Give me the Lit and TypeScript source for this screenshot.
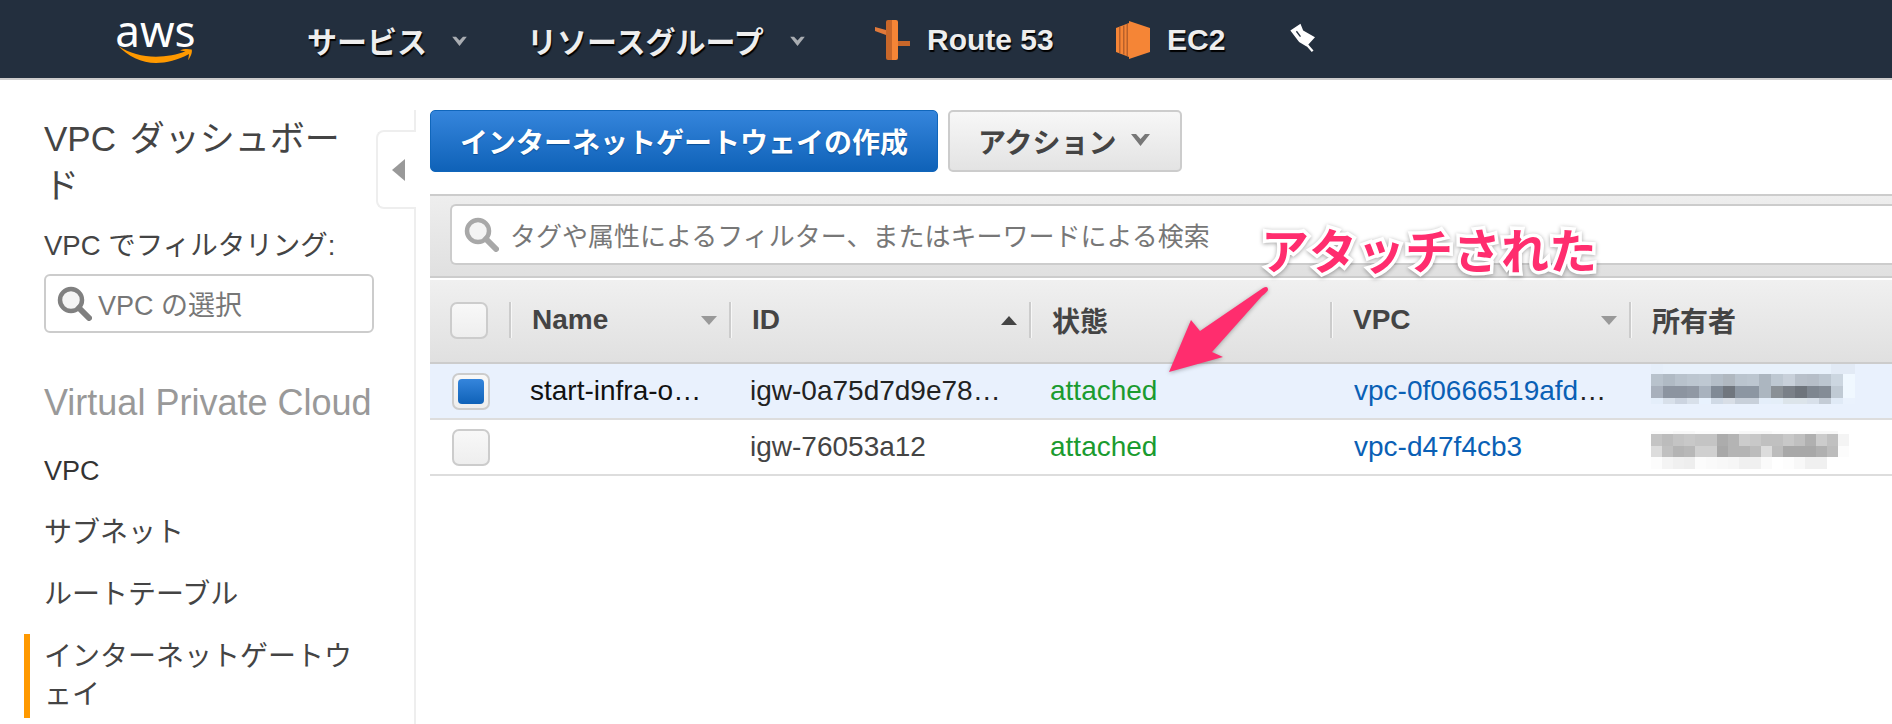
import { LitElement, html, css, svg } from 'lit';
import { customElement } from 'lit/decorators.js';

interface IgwRow {
  name: string;
  id: string;
  state: string;
  vpc: string;
  selected: boolean;
}

const ROWS: IgwRow[] = [
  { name: 'start-infra-o…', id: 'igw-0a75d7d9e78…', state: 'attached', vpc: 'vpc-0f0666519afd', selected: true },
  { name: '', id: 'igw-76053a12', state: 'attached', vpc: 'vpc-d47f4cb3', selected: false },
];

// pixelated owner column, colours read off the reference
const OWNER_A = {
  cell: 12,
  heights: [10, 12, 12, 6],
  bands: [
    'e6effa e8f1fb e8f1fb e8f1fb e8f1fb e8f1fb e8f1fb e8f1fb e8f1fb e8f1fb e8f1fb e8f1fb e8f1fb e8f1fb e8f1fb e2eaf5 e2eaf5',
    'b8c2cc b0bac4 b8c2cc bcc6d0 bec8d2 b4bec8 b0b8c0 bac4ce bcc6d0 acb6c0 bec8d2 c8d0da b8c0ca b6bec8 bcc6d0 ccd6e0 f0f8ff',
    'a8b0bc 8c94a0 8c94a0 9098a4 a8b2be 808a96 70767e 8c96a2 8c96a2 acb6c0 8a9096 7a8088 6e747c 7e8690 848c96 c0cad4 f0f8ff',
    'e4eefa d8e0ea ccd4e0 d8e0ea e8f2fe d0dae6 d8dee6 c8d0da c8d0da e4eefa e4eef8 dce4ea dce4ea d8e0ea c4ccd6 e0eaf6 eaf2fd',
  ],
};

const OWNER_B = {
  cell: 11,
  heights: [3, 12, 11, 12],
  bands: [
    'fcfcfc fcfcfc f8f8f8 f8f8f8 fcfcfc fcfcfc fcfcfc fcfcfc f8f8f8 f8f8f8 f8f8f8 fcfcfc fcfcfc fcfcfc fcfcfc f8f8f8 f8f8f8 ffffff',
    'c4c4c4 bcbcbc c4c4c4 c8c8c8 c4c4c4 c4c4c4 acacac b4b4b4 cccccc c8c8c8 c0c0c0 c0c0c0 c8c8c8 c0c0c0 b0b0b0 cccccc c0c0c0 f4f4f4',
    'dcdcdc c0c0c0 b4b4b4 b8b8b8 d0d0d0 d0d0d0 a8a8a8 b4b4b4 b4b4b4 bcbcbc dcdcdc bcbcbc a8a8a8 a8a8a8 a8a8a8 b0b0b0 bcbcbc fcfcfc',
    'fcfcfc f4f4f4 f0f0f0 eeeeee fcfcfc fafafa f8f8f8 f6f6f6 f0f0f0 f0f0f0 fafafa ffffff fdfdfd f8f8f8 f0f0f0 f0f0f0 ffffff ffffff',
  ],
};

const caret = (cls: string) => html`<svg class=${cls} viewBox="0 0 19 13"><path d="M0 1 L5 1 L9.5 6 L14 1 L19 1 L9.5 13 Z" fill="currentColor"></path></svg>`;

const magnifier = (cls: string) => html`<svg class=${cls} viewBox="0 0 35 35">
  <circle cx="14" cy="14" r="11" fill="#f4f4f4" stroke="currentColor" stroke-width="4.5"></circle>
  <path d="M22 22 L32 32" stroke="currentColor" stroke-width="6" stroke-linecap="round"></path>
</svg>`;

@customElement('app-root')
export class AppRoot extends LitElement {
  static styles = css`
    :host {
      display: block;
      position: relative;
      width: 1892px;
      height: 724px;
      overflow: hidden;
      background: #fff;
      font-family: 'Liberation Sans', 'Noto Sans CJK JP', sans-serif;
      color: #444;
    }

    /* top bar */
    .topbar {
      box-sizing: border-box;
      display: flex;
      align-items: center;
      height: 80px;
      padding-top: 2px;
      background: #232f3e;
      border-bottom: 2px solid #ccc;
      color: #eee;
      font-size: 30px;
      font-weight: 700;
      text-shadow: 1px 2px 1px #000;
    }
    .logo {
      display: flex;
      flex-direction: column;
      align-items: center;
      width: 83px;
      margin: -4px 0 0 114px;
      height: 50px;
    }
    .logo span {
      font-family: 'Noto Sans', sans-serif;
      font-size: 44px;
      font-weight: 400;
      line-height: 34px;
      color: #fff;
      text-shadow: none;
    }
    .logo svg {
      width: 83px;
      height: 19px;
      margin-top: -1px;
    }
    .nav-services {
      margin-left: 110px;
      width: 117px;
      white-space: nowrap;
    }
    .top-caret {
      width: 17px;
      height: 10px;
      color: #a9adb2;
    }
    .caret-services {
      margin: 2px 0 0 27px;
    }
    .nav-groups {
      margin-left: 59px;
      white-space: nowrap;
      width: 239px;
    }
    .caret-groups {
      margin: 2px 0 0 23px;
    }
    .icon-r53 {
      width: 36px;
      height: 40px;
      margin-left: 68px;
    }
    .txt-r53 {
      margin-left: 17px;
      width: 127px;
      white-space: nowrap;
    }
    .icon-ec2 {
      width: 34px;
      height: 38px;
      margin-left: 62px;
    }
    .txt-ec2 {
      margin-left: 17px;
      width: 58px;
    }
    .icon-pin {
      width: 27px;
      height: 29px;
      margin-left: 64px;
      margin-top: -6px;
    }

    .body {
      display: flex;
      height: 644px;
    }

    /* left navigation */
    .sidebar {
      box-sizing: border-box;
      width: 416px;
      flex: none;
      margin-top: 30px;
      padding: 5px 40px 0 44px;
      border-right: 2px solid #eee;
    }
    .sb-title {
      font-size: 35px;
      font-weight: 400;
      line-height: 47px;
      word-spacing: 4px;
      margin: 0;
      max-width: 310px;
      color: #444;
    }
    .sb-label {
      font-size: 27.5px;
      line-height: 38px;
      margin-top: 18px;
      white-space: nowrap;
    }
    .sb-filter {
      box-sizing: border-box;
      display: flex;
      align-items: center;
      gap: 6px;
      width: 330px;
      height: 59px;
      margin-top: 9px;
      padding-left: 11px;
      border: 2px solid #ccc;
      border-radius: 6px;
      font-size: 27px;
      color: #777;
      white-space: nowrap;
    }
    .mag {
      width: 35px;
      height: 35px;
      flex: none;
      color: #808080;
    }
    .sb-section {
      font-size: 36px;
      line-height: 44px;
      color: #999;
      margin-top: 48px;
      white-space: nowrap;
    }
    .sb-nav {
      display: flex;
      flex-direction: column;
      gap: 16px;
      margin: 23px 0 0 -20px;
      font-size: 28px;
      line-height: 38px;
      line-break: anywhere;
    }
    .sb-item {
      box-sizing: border-box;
      padding: 4px 0 4px 14px;
      border-left: 6px solid transparent;
    }
    .sb-item.first {
      color: #333;
      font-size: 27px;
    }
    .sb-item.active {
      border-left-color: #f90;
    }
    .collapse {
      box-sizing: border-box;
      position: absolute;
      left: 376px;
      top: 130px;
      width: 40px;
      height: 79px;
      background: #fff;
      border: 2px solid #eee;
      border-right: none;
      border-radius: 8px 0 0 8px;
      display: flex;
      align-items: center;
      padding-left: 14px;
    }
    .collapse i {
      display: block;
      border-style: solid;
      border-width: 11px 13px 11px 0;
      border-color: transparent #999 transparent transparent;
    }

    /* main content */
    .main {
      flex: 1;
      min-width: 0;
      padding: 30px 0 0 14px;
    }
    .actions {
      display: flex;
      gap: 10px;
    }
    .btn {
      box-sizing: border-box;
      display: flex;
      align-items: center;
      height: 62px;
      border-radius: 5px;
      font-size: 28px;
      font-weight: 700;
      white-space: nowrap;
    }
    .btn-primary {
      width: 508px;
      justify-content: center;
      color: #fff;
      background: linear-gradient(#3585dc, #0f62b8);
      border: 1px solid #1066bb;
      text-shadow: 0 1px 1px #0b4f96;
    }
    .btn-secondary {
      width: 234px;
      padding-left: 28px;
      color: #444;
      background: linear-gradient(#f7f7f7, #e3e3e3);
      border: 2px solid #ccc;
    }
    .btn-secondary svg {
      width: 19px;
      height: 13px;
      margin: -4px 0 0 14px;
      color: #777;
    }
    .filter-bar {
      box-sizing: border-box;
      height: 84px;
      margin-top: 22px;
      padding: 8px 0 0 20px;
      background: linear-gradient(#eee, #e0e0e0);
      border-top: 2px solid #ccc;
      border-bottom: 2px solid #ccc;
    }
    .filter-input {
      box-sizing: border-box;
      display: flex;
      align-items: center;
      gap: 11px;
      height: 61px;
      padding-left: 12px;
      background: #fff;
      border: 2px solid #ccc;
      border-right: none;
      border-radius: 6px 0 0 6px;
      font-size: 26px;
      color: #777;
      white-space: nowrap;
    }
    .filter-input .mag {
      color: #a8a8a8;
    }

    .grid {
      display: grid;
      grid-template-columns: 79px 220px 300px 301px 299px 1fr;
    }
    .thead {
      height: 84px;
      box-sizing: border-box;
      margin-top: 2px;
      background: linear-gradient(#f0f0f0, #e0e0e0);
      border-bottom: 2px solid #ccc;
      font-size: 28px;
      font-weight: 700;
      color: #444;
    }
    .th {
      display: flex;
      align-items: center;
      padding-right: 12px;
      padding-bottom: 2px;
      min-width: 0;
    }
    .th .sep {
      width: 2px;
      height: 36px;
      margin-right: 21px;
      background: #ccc;
      box-shadow: 1px 0 0 #f7f7f7;
      flex: none;
    }
    .sort {
      margin-left: auto;
      border-style: solid;
      border-color: transparent;
      border-width: 0 8px;
    }
    .sort.down {
      border-top: 9px solid #999;
    }
    .sort.up {
      border-bottom: 9px solid #444;
    }
    .cb {
      box-sizing: border-box;
      width: 38px;
      height: 37px;
      border: 2px solid #ccc;
      border-radius: 7px;
      background: linear-gradient(#f8f8f8, #eee);
      display: flex;
      align-items: center;
      justify-content: center;
    }
    .cb b {
      display: block;
      width: 26px;
      height: 25px;
      border-radius: 4px;
      background: linear-gradient(#3585dc, #0f62b8);
    }
    .th-check {
      padding-left: 20px;
      padding-right: 0;
    }
    .row {
      height: 56px;
      box-sizing: border-box;
      border-bottom: 2px solid #ddd;
      font-size: 28px;
      align-items: center;
      white-space: nowrap;
    }
    .row.selected {
      background: #e9f1fd;
    }
    .td {
      padding-left: 21px;
      min-width: 0;
    }
    .td-check {
      padding-left: 22px;
    }
    .td-name {
      color: #111;
    }
    .td-id {
      color: #444;
    }
    .row.selected .td-id {
      color: #222;
    }
    .td-state {
      color: #1a9b2f;
    }
    .td-vpc {
      padding-left: 24px;
      color: #0a60b5;
    }
    .td-vpc em {
      font-style: normal;
      color: #222;
    }
    .td-owner {
      align-self: start;
      padding-left: 22px;
    }
    .mosaic {
      display: grid;
    }
    .mosaic.lower {
      margin-top: 11px;
    }

    /* callout drawn over the table */
    .callout {
      position: absolute;
      left: 1261px;
      top: 213px;
      font-family: 'Noto Sans CJK JP', sans-serif;
      font-size: 48px;
      font-weight: 700;
      line-height: 70px;
      color: #ff2d6e;
      white-space: nowrap;
      -webkit-text-stroke: 7px #fff;
      paint-order: stroke fill;
      filter: drop-shadow(0 1px 2px rgba(0, 0, 0, 0.35));
    }
    .arrow {
      position: absolute;
      left: 1160px;
      top: 280px;
      width: 120px;
      height: 100px;
      filter: drop-shadow(0 1px 2px rgba(0, 0, 0, 0.3));
    }
  `;

  private renderMosaic(data: typeof OWNER_A, lower: boolean) {
    const cells = data.bands.flatMap((b) => b.split(' '));
    const cols = data.bands[0].split(' ').length;
    return html`<div
      class="mosaic ${lower ? 'lower' : ''}"
      style="grid-template-columns:repeat(${cols},${data.cell}px);grid-template-rows:${data.heights.map((h) => h + 'px').join(' ')}"
    >
      ${cells.map((c) => html`<span style="background:#${c}"></span>`)}
    </div>`;
  }

  private renderTopbar() {
    return html`<header class="topbar">
      <div class="logo">
        <span>aws</span>
        <svg viewBox="0 0 83 19">
          ${svg`<path d="M0 0 C12 8 27 12 42 12 C54 12 66 10 75 6 L69 5 C73 3 78 3 82 4 C83 8 80 13 78 16 L79 9 C66 16 54 19 42 19 C26 19 10 11 0 0 Z" fill="#f90"></path>`}
        </svg>
      </div>
      <span class="nav-services">サービス</span>
      ${caret('top-caret caret-services')}
      <span class="nav-groups">リソースグループ</span>
      ${caret('top-caret caret-groups')}
      <svg class="icon-r53" viewBox="0 0 36 40">
        <path d="M1 7 L12 10 L12 15 L1 11 Z" fill="#e0793a"></path>
        <path d="M24 21 L36 21 L36 26 L24 26 Z" fill="#c8672a"></path>
        <path d="M12 2 Q12 0 14 0 L18 0 L18 40 L14 40 Q12 40 12 38 Z" fill="#c8672a"></path>
        <path d="M18 0 L22 0 Q24 0 24 2 L24 38 Q24 40 22 40 L18 40 Z" fill="#f58536"></path>
      </svg>
      <span class="txt-r53">Route 53</span>
      <svg class="icon-ec2" viewBox="0 0 34 38">
        <path d="M0 7 L13 2 L13 36 L0 31 Z" fill="#f58536"></path>
        <path d="M3 6 h1.5 v26 h-1.5 Z M7 4.5 h1.5 v29 h-1.5 Z M10.5 3 h1.5 v32 h-1.5 Z" fill="#b8602a"></path>
        <path d="M13 0 L34 7 L34 31 L13 38 Z" fill="#f58536"></path>
      </svg>
      <span class="txt-ec2">EC2</span>
      <svg class="icon-pin" viewBox="28 26 80 85">
        <path d="M32 48 L62 28 L70 48 L105 68 L80 95 L58 82 Z" fill="#fff"></path>
        <path d="M76 84 L98 109" stroke="#fff" stroke-width="7"></path>
        <path d="M50 50 L62 66" stroke="#232f3e" stroke-width="4"></path>
      </svg>
    </header>`;
  }

  private renderSidebar() {
    return html`<aside class="sidebar">
      <h1 class="sb-title">VPC ダッシュボード</h1>
      <div class="sb-label">VPC でフィルタリング:</div>
      <div class="sb-filter">${magnifier('mag')}<span>VPC の選択</span></div>
      <div class="sb-section">Virtual Private Cloud</div>
      <nav class="sb-nav">
        <div class="sb-item first">VPC</div>
        <div class="sb-item">サブネット</div>
        <div class="sb-item">ルートテーブル</div>
        <div class="sb-item active">インターネットゲートウェイ</div>
      </nav>
    </aside>`;
  }

  private renderRow(row: IgwRow, owner: typeof OWNER_A, lower: boolean) {
    return html`<div class="grid row ${row.selected ? 'selected' : ''}">
      <div class="td-check td"><div class="cb">${row.selected ? html`<b></b>` : ''}</div></div>
      <div class="td td-name">${row.name}</div>
      <div class="td td-id">${row.id}</div>
      <div class="td td-state">${row.state}</div>
      <div class="td td-vpc">${row.vpc}${row.selected ? html`<em>…</em>` : ''}</div>
      <div class="td td-owner">${this.renderMosaic(owner, lower)}</div>
    </div>`;
  }

  render() {
    return html`
      ${this.renderTopbar()}
      <div class="body">
        ${this.renderSidebar()}
        <main class="main">
          <div class="actions">
            <div class="btn btn-primary">インターネットゲートウェイの作成</div>
            <div class="btn btn-secondary">アクション${caret('')}</div>
          </div>
          <div class="filter-bar">
            <div class="filter-input">${magnifier('mag')}<span>タグや属性によるフィルター、またはキーワードによる検索</span></div>
          </div>
          <div class="grid thead">
            <div class="th th-check"><div class="cb"></div></div>
            <div class="th"><i class="sep"></i>Name<i class="sort down"></i></div>
            <div class="th"><i class="sep"></i>ID<i class="sort up"></i></div>
            <div class="th"><i class="sep"></i>状態</div>
            <div class="th"><i class="sep"></i>VPC<i class="sort down"></i></div>
            <div class="th"><i class="sep"></i>所有者</div>
          </div>
          ${this.renderRow(ROWS[0], OWNER_A, false)}
          ${this.renderRow(ROWS[1], OWNER_B, true)}
        </main>
      </div>
      <div class="collapse"><i></i></div>
      <div class="callout">アタッチされた</div>
      <svg class="arrow" viewBox="1160 280 120 100">
        <path d="M1263 288 Q1268 285 1268 290 Q1267 292 1262 296 L1212 352 L1223 357 L1169 372 L1191 320 L1200 331 Z" fill="#ff2d6e"></path>
      </svg>
    `;
  }
}

declare global {
  interface HTMLElementTagNameMap {
    'app-root': AppRoot;
  }
}
